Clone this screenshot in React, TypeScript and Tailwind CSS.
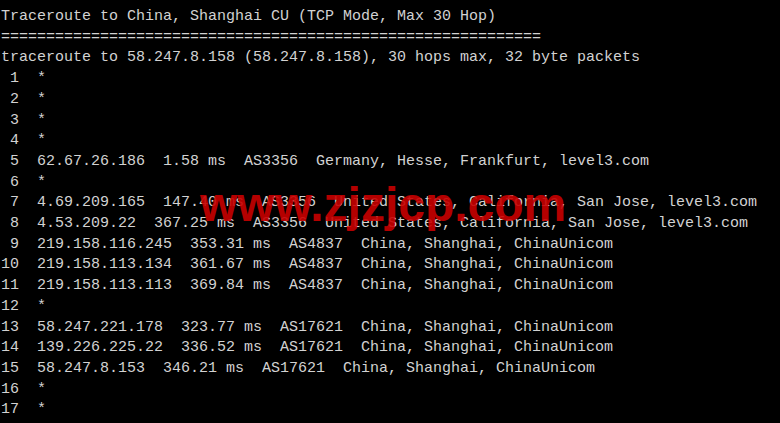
const lines = [
  'Traceroute to China, Shanghai CU (TCP Mode, Max 30 Hop)',
  '============================================================',
  'traceroute to 58.247.8.158 (58.247.8.158), 30 hops max, 32 byte packets',
  ' 1  *',
  ' 2  *',
  ' 3  *',
  ' 4  *',
  ' 5  62.67.26.186  1.58 ms  AS3356  Germany, Hesse, Frankfurt, level3.com',
  ' 6  *',
  ' 7  4.69.209.165  147.40 ms  AS3356  United States, California, San Jose, level3.com',
  ' 8  4.53.209.22  367.25 ms  AS3356  United States, California, San Jose, level3.com',
  ' 9  219.158.116.245  353.31 ms  AS4837  China, Shanghai, ChinaUnicom',
  '10  219.158.113.134  361.67 ms  AS4837  China, Shanghai, ChinaUnicom',
  '11  219.158.113.113  369.84 ms  AS4837  China, Shanghai, ChinaUnicom',
  '12  *',
  '13  58.247.221.178  323.77 ms  AS17621  China, Shanghai, ChinaUnicom',
  '14  139.226.225.22  336.52 ms  AS17621  China, Shanghai, ChinaUnicom',
  '15  58.247.8.153  346.21 ms  AS17621  China, Shanghai, ChinaUnicom',
  '16  *',
  '17  *',
]

export default function App() {
  return (
    <div className="relative w-[780px] h-[423px] overflow-hidden bg-black">
      <pre className="pl-[1px] pt-[7px] text-[15px] leading-[20.7px] text-[#d2d2d2] font-['Liberation_Mono',monospace] whitespace-pre">
        {lines.map((l, i) => (
          <div key={i}>{l}</div>
        ))}
      </pre>
      {/* watermark */}
      <div className="absolute left-[200px] top-[181px] text-[48px] leading-[48px] font-bold text-[#c80000]/90 font-['Liberation_Sans',Arial,sans-serif]">
        www.zjzjcp.com
      </div>
    </div>
  )
}
